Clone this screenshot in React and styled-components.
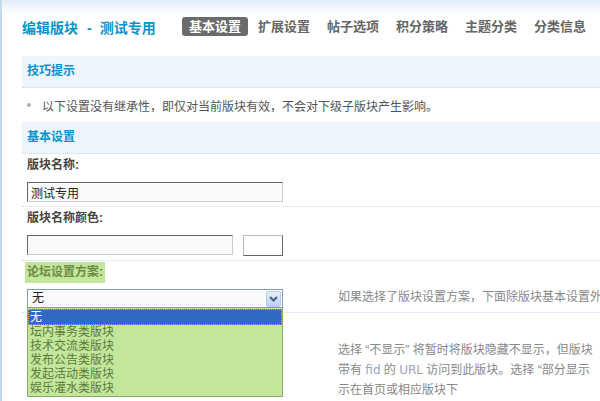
import React from 'react'
import styled, { createGlobalStyle } from 'styled-components'

const Global = createGlobalStyle`
  html, body { margin: 0; padding: 0; background: #fff; }
  body {
    font-family: "Liberation Sans", "Noto Sans CJK SC", sans-serif;
    font-size: 12px;
    color: #666;
    overflow: hidden;
  }
`

const tabs = ['基本设置', '扩展设置', '帖子选项', '积分策略', '主题分类', '分类信息']
const schemes = ['坛内事务类版块', '技术交流类版块', '发布公告类版块', '发起活动类版块', '娱乐灌水类版块']

function App() {
  return (
    <Page>
      <Global />
      <Header>
        <Title>
          编辑版块<Dash>-</Dash>测试专用
        </Title>
        <Tabs>
          {tabs.map((t, i) => (
            <Tab key={t} active={i === 0}>{t}</Tab>
          ))}
        </Tabs>
      </Header>

      <SectionHead>技巧提示</SectionHead>
      <TipRow>
        <Bullet />
        以下设置没有继承性，即仅对当前版块有效，不会对下级子版块产生影响。
      </TipRow>

      <SectionHead>基本设置</SectionHead>
      <Table>
        <LabelRow><Label>版块名称:</Label></LabelRow>
        <InputRow>
          <Cell><TextInput width="256px" defaultValue="测试专用" /></Cell>
          <Tip />
        </InputRow>

        <LabelRow><Label>版块名称颜色:</Label></LabelRow>
        <InputRow>
          <Cell>
            <ColorLine>
              <TextInput width="206px" />
              <Swatch />
            </ColorLine>
          </Cell>
          <Tip />
        </InputRow>

        <LabelRow><Label highlight>论坛设置方案:</Label></LabelRow>
        <InputRow>
          <Cell>
            <SelectWrap>
              <SelectBox>
                <SelectValue>无</SelectValue>
                <ArrowBtn>
                  <svg width="9" height="6" viewBox="0 0 9 6">
                    <path d="M1 1 L4.5 4.5 L8 1" fill="none" stroke="#4d6185" strokeWidth="2" />
                  </svg>
                </ArrowBtn>
              </SelectBox>
              <DropList>
                <DropItem selected>无</DropItem>
                {schemes.map(s => (
                  <DropItem key={s}>{s}</DropItem>
                ))}
              </DropList>
            </SelectWrap>
          </Cell>
          <Tip>如果选择了版块设置方案，下面除版块基本设置外</Tip>
        </InputRow>

        <LabelRow><Label>显示:</Label></LabelRow>
        <InputRow last>
          <Cell />
          <Tip long>
            选择 “不显示” 将暂时将版块隐藏不显示，但版块<br />
            带有 <Latin>fid</Latin> 的 <Latin>URL</Latin> 访问到此版块。选择 “部分显示<br />
            示在首页或相应版块下
          </Tip>
        </InputRow>
      </Table>
    </Page>
  )
}

const Page = styled.div`
  min-height: 401px;
  border-left: 2px solid #c4d9eb;
  padding-left: 20px;
  background: linear-gradient(#e1edf8, #ffffff 14px);
  box-sizing: border-box;
`
const Header = styled.div`
  display: flex;
  align-items: center;
  height: 56px;
  padding-bottom: 3px;
  box-sizing: border-box;
`
const Title = styled.div`
  width: 160px;
  flex-shrink: 0;
  font-size: 14px;
  font-weight: bold;
  color: #0a93c8;
  white-space: nowrap;
`
const Dash = styled.span`
  margin: 0 8px 0 9px;
`
const Tabs = styled.div`
  display: flex;
  gap: 3px;
`
const Tab = styled.div`
  height: 19px;
  line-height: 19px;
  padding: 0 7px;
  border-radius: 3px;
  font-size: 13px;
  font-weight: bold;
  white-space: nowrap;
  color: ${p => (p.active ? '#fff' : '#666')};
  background: ${p => (p.active ? '#6b6b6b' : 'transparent')};
`
const SectionHead = styled.div`
  height: 31px;
  line-height: 30px;
  padding-left: 5px;
  background: #eef5fc;
  border-bottom: 1px dotted #c7dcee;
  color: #0a93c8;
  font-weight: bold;
  font-size: 12px;
`
const TipRow = styled.div`
  display: flex;
  align-items: center;
  height: 34px;
  padding-left: 5px;
  color: #555;
  white-space: nowrap;
`
const Bullet = styled.span`
  width: 4px;
  height: 4px;
  border-radius: 50%;
  background: #b0b0b0;
  margin-right: 11px;
`
const Table = styled.div`
  display: flex;
  flex-direction: column;
`
const LabelRow = styled.div`
  height: 22px;
  display: flex;
  align-items: flex-end;
  padding-left: 5px;
`
const Label = styled.div`
  font-weight: bold;
  color: ${p => (p.highlight ? '#6c8a45' : '#444')};
  background: ${p => (p.highlight ? '#c3e69c' : 'transparent')};
  height: 21px;
  line-height: 21px;
  margin-left: ${p => (p.highlight ? '-2px' : '0')};
  padding: ${p => (p.highlight ? '0 2px' : '0')};
  margin-top: ${p => (p.highlight ? '0' : '1px')};
`
const InputRow = styled.div`
  display: grid;
  grid-template-columns: 311px 1fr;
  min-height: 29px;
  border-bottom: ${p => (p.last ? 'none' : '1px dotted #c7dcee')};
  padding-left: 5px;
`
const Cell = styled.div`
  padding-top: 6px;
  padding-bottom: 4px;
`
const Tip = styled.div`
  color: #888;
  white-space: nowrap;
  padding-top: ${p => (p.long ? '5px' : '4px')};
  line-height: 20px;
  overflow: hidden;
`
const Latin = styled.span`
  font-family: "DejaVu Sans", sans-serif;
  font-size: 12px;
  color: #9aa3c0;
`
const TextInput = styled.input`
  width: ${p => p.width};
  height: 20px;
  box-sizing: border-box;
  border: 1px solid;
  border-color: #666 #ccc #ccc #666;
  background: #f9f9f9;
  padding: 0 3px;
  font-family: "Noto Sans CJK SC", sans-serif;
  font-size: 12px;
  color: #222;
  outline: none;
`
const ColorLine = styled.div`
  display: flex;
  gap: 10px;
`
const Swatch = styled.div`
  width: 40px;
  height: 21px;
  box-sizing: border-box;
  border: 1px solid;
  border-color: #bbb #666 #666 #bbb;
  background: #fff;
`
const SelectWrap = styled.div`
  position: relative;
  width: 256px;
`
const SelectBox = styled.div`
  height: 19px;
  box-sizing: border-box;
  border: 1px solid #7f9db9;
  background: #fff;
  display: flex;
  align-items: center;
  padding: 0 1px 0 2px;
`
const SelectValue = styled.div`
  flex: 1;
  height: 15px;
  line-height: 15px;
  background: #f9f9f9;
  color: #222;
  padding-left: 2px;
`
const ArrowBtn = styled.div`
  width: 15px;
  height: 16px;
  margin-left: 2px;
  box-sizing: border-box;
  border: 1px solid #b7c9ee;
  border-radius: 2px;
  background: linear-gradient(#e6effe, #bcd0f6);
  display: flex;
  align-items: center;
  justify-content: center;
`
const DropList = styled.div`
  position: absolute;
  top: 100%;
  left: 0;
  width: 256px;
  box-sizing: border-box;
  background: #c3e69b;
  border: 1px solid #88ad72;
  border-top: none;
  padding-bottom: 1px;
  z-index: 2;
`
const DropItem = styled.div`
  height: ${p => (p.selected ? '16px' : '14px')};
  line-height: ${p => (p.selected ? '16px' : '14px')};
  padding-left: 2px;
  color: ${p => (p.selected ? '#fff' : '#5d7a3b')};
  background: ${p => (p.selected ? '#316ac5' : 'transparent')};
  outline: ${p => (p.selected ? '1px dotted #e2a23c' : 'none')};
  outline-offset: -1px;
  font-size: 12px;
  overflow: hidden;
  margin-top: ${p => (p.selected ? '1px' : '0')};
`

export default App
